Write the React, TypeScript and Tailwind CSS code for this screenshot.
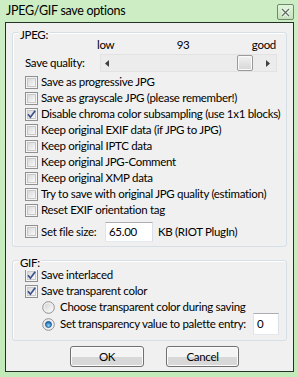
import React from 'react'

function CheckBox({ on }: { on?: boolean }) {
  return (
    <svg width="13" height="13" viewBox="0 0 13 13" className="shrink-0">
      <defs>
        <linearGradient id="cbfill" x1="0" y1="0" x2="1" y2="1">
          <stop offset="0" stopColor="#d6d6d6" />
          <stop offset="1" stopColor="#fbfbfb" />
        </linearGradient>
      </defs>
      <rect x="0.5" y="0.5" width="12" height="12" fill="#f4f4f4" stroke="#8f8f8f" />
      <rect x="2.5" y="2.5" width="8" height="8" fill="url(#cbfill)" stroke="#c9c9c9" />
      {on && (
        <path d="M3 6.3 L5.4 9.2 L10.2 2.8" fill="none" stroke="#3b4f8a" strokeWidth="1.7" />
      )}
    </svg>
  )
}

function Radio({ on }: { on?: boolean }) {
  return (
    <svg width="13" height="13" viewBox="0 0 13 13" className="shrink-0">
      <defs>
        <linearGradient id="rdfill" x1="0" y1="0" x2="1" y2="1">
          <stop offset="0" stopColor="#d4d4d4" />
          <stop offset="1" stopColor="#fafafa" />
        </linearGradient>
        <radialGradient id="rddot" cx="0.5" cy="0.7" r="0.6">
          <stop offset="0" stopColor="#8fd6fb" />
          <stop offset="1" stopColor="#1d6bb0" />
        </radialGradient>
      </defs>
      <circle cx="6.5" cy="6.5" r="5.8" fill="#f2f2f2" stroke="#8f8f8f" />
      <circle cx="6.5" cy="6.5" r="4" fill="url(#rdfill)" />
      {on && <circle cx="6.5" cy="6.5" r="3" fill="url(#rddot)" stroke="#14508a" strokeWidth="0.8" />}
    </svg>
  )
}

function Option({ label, on }: { label: string; on?: boolean }) {
  return (
    <div className="flex h-4 items-center gap-[3px] pl-[12px]">
      <CheckBox on={on} />
      <span className="whitespace-nowrap">{label}</span>
    </div>
  )
}

function Button({ label, w }: { label: string; w: string }) {
  return (
    <div
      className={`${w} flex h-[21px] items-center justify-center rounded-[3px] border border-[#707070] bg-gradient-to-b from-[#f4f4f4] from-50% to-[#d8d8d8] to-50% shadow-[inset_0_0_0_1px_#fcfcfc]`}
    >
      {label}
    </div>
  )
}

export default function App() {
  return (
    <div className="h-[377px] w-[298px] overflow-hidden bg-gradient-to-b from-[#cdeec5] to-[#c3eab9] font-[family-name:Lato,Liberation_Sans,sans-serif] text-[11.5px] leading-[14px] tracking-[-0.3px] text-black">
      {/* title bar */}
      <div className="flex h-[22px] items-start justify-between pl-[6px] pr-[4px]">
        <span className="mt-[3px] text-[12.5px] leading-[16px] tracking-[-0.3px]">JPEG/GIF save options</span>
        <div className="mt-[4px] flex h-[16px] w-[17px] items-center justify-center rounded-[2px] border border-[#6d8a6c] bg-gradient-to-b from-[#e2f5dd] to-[#c4e2bc]">
          <svg width="9" height="9" viewBox="0 0 9 9">
            <path d="M1 1 L8 8 M8 1 L1 8" stroke="#ffffff" strokeWidth="3" />
            <path d="M1 1 L8 8 M8 1 L1 8" stroke="#5e6f5e" strokeWidth="1.4" />
          </svg>
        </div>
      </div>

      {/* client area */}
      <div className="ml-[5px] h-[350px] w-[289px] border border-[#243224] bg-[#f0f0f0] pl-[6px]">
        {/* JPEG group */}
        <div className="relative mt-[9px] h-[215px] w-[275px] rounded-[3px] border border-[#d5dfe5] shadow-[inset_1px_1px_0_#ffffff]">
          <span className="absolute -top-[5px] left-[6px] bg-[#f0f0f0] px-[1px]">JPEG:</span>
          <div className="mt-[6px] flex h-[12px] items-center justify-between pl-[84px] pr-[10px]">
            <span>low</span>
            <span>93</span>
            <span>good</span>
          </div>
          <div className="mt-[3px] flex h-[18px] items-center pl-[12px]">
            <span className="w-[75px] whitespace-nowrap">Save quality:</span>
            <div className="flex h-[18px] w-[177px] items-center border border-[#e2e2e2] bg-[#ececec] pl-[4px] pr-[6px]">
              <svg width="5" height="7" viewBox="0 0 5 7">
                <path d="M4 0 L0 3.5 L4 7 Z" fill="#404040" />
              </svg>
              <div className="flex-1" />
              <div className="mr-[12px] h-[16px] w-[16px] rounded-[2px] border border-[#9a9a9a] bg-gradient-to-b from-[#f2f2f2] to-[#d6d6d6] shadow-[inset_0_0_0_1px_#fbfbfb]" />
              <svg width="5" height="7" viewBox="0 0 5 7">
                <path d="M1 0 L5 3.5 L1 7 Z" fill="#404040" />
              </svg>
            </div>
          </div>
          <div className="mt-[2px] flex flex-col">
            <Option label="Save as progressive JPG" />
            <Option label="Save as grayscale JPG (please remember!)" />
            <Option label="Disable chroma color subsampling (use 1x1 blocks)" on />
            <Option label="Keep original EXIF data (if JPG to JPG)" />
            <Option label="Keep original IPTC data" />
            <Option label="Keep original JPG-Comment" />
            <Option label="Keep original XMP data" />
            <Option label="Try to save with original JPG quality (estimation)" />
            <Option label="Reset EXIF orientation tag" />
          </div>
          <div className="mt-[3px] flex h-[21px] items-center pl-[12px]">
            <CheckBox />
            <span className="ml-[3px] w-[64px] whitespace-nowrap">Set file size:</span>
            <div className="flex h-[20px] w-[48px] items-center border border-[#abadb3] border-b-[#e3e9ef] border-l-[#e2e3ea] border-r-[#dbdfe6] bg-white pl-[3px]">
              65.00
            </div>
            <span className="ml-[5px] whitespace-nowrap">KB (RIOT PlugIn)</span>
          </div>
        </div>

        {/* GIF group */}
        <div className="relative mt-[13px] h-[81px] w-[275px] rounded-[3px] border border-[#d5dfe5] shadow-[inset_1px_1px_0_#ffffff]">
          <span className="absolute -top-[5px] left-[6px] bg-[#f0f0f0] px-[1px]">GIF:</span>
          <div className="mt-[6px] flex flex-col">
            <Option label="Save interlaced" on />
            <Option label="Save transparent color" on />
            <div className="flex h-4 items-center gap-[5px] pl-[29px]">
              <Radio />
              <span className="whitespace-nowrap">Choose transparent color during saving</span>
            </div>
            <div className="flex h-[18px] items-center pl-[29px]">
              <Radio on />
              <span className="ml-[5px] whitespace-nowrap">Set transparency value to palette entry:</span>
              <div className="ml-auto mr-[7px] flex h-[22px] w-[26px] shrink-0 items-center border border-[#abadb3] border-b-[#e3e9ef] border-l-[#e2e3ea] border-r-[#dbdfe6] bg-white pl-[3px]">
                0
              </div>
            </div>
          </div>
        </div>

        {/* buttons */}
        <div className="mt-[5px] flex gap-[22px] pl-[58px]">
          <Button label="OK" w="w-[74px]" />
          <Button label="Cancel" w="w-[73px]" />
        </div>
      </div>
    </div>
  )
}
